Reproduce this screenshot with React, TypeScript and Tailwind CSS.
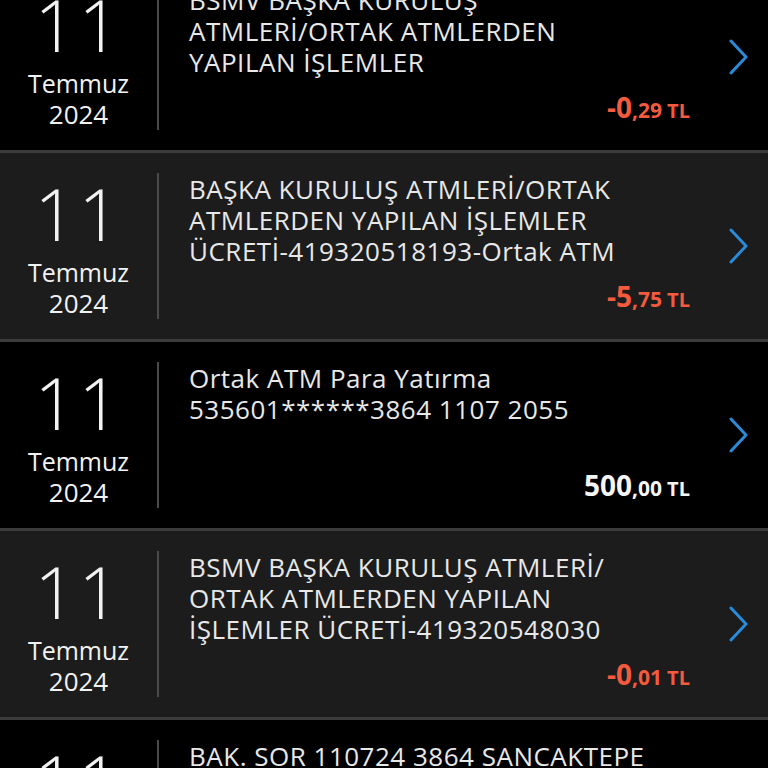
interface Tx {
  lines: string[];
  whole: string;
  cents: string;
  negative: boolean;
}

const txs: Tx[] = [
  {
    lines: ['BSMV BAŞKA KURULUŞ', 'ATMLERİ/ORTAK ATMLERDEN', 'YAPILAN İŞLEMLER'],
    whole: '-0',
    cents: ',29',
    negative: true,
  },
  {
    lines: ['BAŞKA KURULUŞ ATMLERİ/ORTAK', 'ATMLERDEN YAPILAN İŞLEMLER', 'ÜCRETİ-419320518193-Ortak ATM'],
    whole: '-5',
    cents: ',75',
    negative: true,
  },
  {
    lines: ['Ortak ATM Para Yatırma', '535601******3864 1107 2055'],
    whole: '500',
    cents: ',00',
    negative: false,
  },
  {
    lines: ['BSMV BAŞKA KURULUŞ ATMLERİ/', 'ORTAK ATMLERDEN YAPILAN', 'İŞLEMLER ÜCRETİ-419320548030'],
    whole: '-0',
    cents: ',01',
    negative: true,
  },
  {
    lines: ['BAK. SOR 110724 3864 SANCAKTEPE', 'İSTANBUL'],
    whole: '-0',
    cents: ',00',
    negative: true,
  },
];

function Chevron() {
  return (
    <svg width="22" height="36" viewBox="0 0 22 36" fill="none">
      <polyline points="3,2 18,18 3,34" stroke="#2a8bd8" strokeWidth="3" strokeLinecap="round" strokeLinejoin="round" />
    </svg>
  );
}

function Row({ tx, index }: { tx: Tx; index: number }) {
  return (
    <div
      className={`flex h-[189px] border-t-[3px] border-[#3b3b3b] first:border-t-0 first:h-[186px] ${
        index % 2 === 1 ? 'bg-[#1c1c1c]' : 'bg-black'
      }`}
    >
      <div className="w-[157px] shrink-0 flex flex-col items-center pt-[24px] text-[#f2f2f2]">
        <span className="text-[72px] font-light leading-[72px] tracking-[3px]">11</span>
        <span className="text-[25px] leading-[31px] mt-[8px]">Temmuz</span>
        <span className="text-[26px] leading-[31px]">2024</span>
      </div>
      <div className="w-[2px] bg-[#4a4a4a] my-[20px] shrink-0" />
      <div className="flex-1 flex flex-col justify-between pl-[30px] pt-[21px] pb-[29px]">
        <div className="text-[26px] leading-[31px] tracking-[0.5px] text-[#e8e8e8]">
          {tx.lines.map(l => (
            <div key={l} className="whitespace-nowrap">{l}</div>
          ))}
        </div>
        <div
          className={`self-end font-bold whitespace-nowrap leading-none ${
            tx.negative ? 'text-[#f35a3e]' : 'text-[#f5f5f5]'
          }`}
        >
          <span className="text-[28px]">{tx.whole}</span>
          <span className="text-[21px]">{tx.cents}</span>
          <span className="text-[20px]"> TL</span>
        </div>
      </div>
      <div className="w-[78px] shrink-0 flex items-center pl-[38px]">
        <Chevron />
      </div>
    </div>
  );
}

export default function App() {
  return (
    <div className="w-[768px] h-[768px] overflow-hidden bg-black" style={{ fontFamily: '"Open Sans", "Noto Sans", sans-serif' }}>
      <div className="-mt-[36px]">
        {txs.map((tx, i) => (
          <Row key={i} tx={tx} index={i} />
        ))}
      </div>
    </div>
  );
}
